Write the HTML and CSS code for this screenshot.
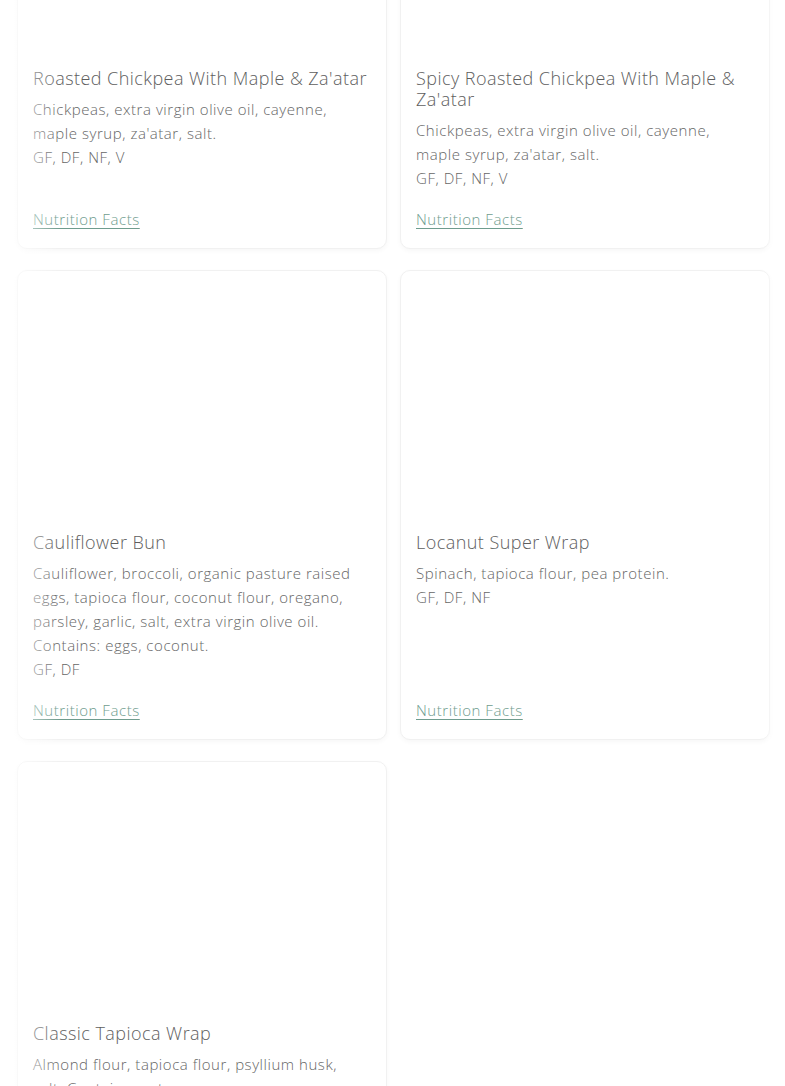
FILE: index.html
```html
<!DOCTYPE html>
<html lang="en">
<head>
<meta charset="utf-8">
<title>Wraps &amp; Buns</title>
<link rel="stylesheet" href="styles.css">
</head>
<body>
<div class="page">
  <div class="grid">
    <article class="card">
      <div class="photo"></div>
      <h3 class="title">Roasted Chickpea With Maple &amp; Za'atar</h3>
      <p class="desc">Chickpeas, extra virgin olive oil, cayenne, maple syrup, za'atar, salt.</p>
      <p class="tags">GF, DF, NF, V</p>
      <a class="facts" href="#">Nutrition Facts</a>
    </article>
    <article class="card">
      <div class="photo"></div>
      <h3 class="title">Spicy Roasted Chickpea With Maple &amp; Za'atar</h3>
      <p class="desc">Chickpeas, extra virgin olive oil, cayenne, maple syrup, za'atar, salt.</p>
      <p class="tags">GF, DF, NF, V</p>
      <a class="facts" href="#">Nutrition Facts</a>
    </article>
    <article class="card">
      <div class="photo"></div>
      <h3 class="title">Cauliflower Bun</h3>
      <p class="desc">Cauliflower, broccoli, organic pasture raised eggs, tapioca flour, coconut flour, oregano, parsley, garlic, salt, extra virgin olive oil. Contains: eggs, coconut.</p>
      <p class="tags">GF, DF</p>
      <a class="facts" href="#">Nutrition Facts</a>
    </article>
    <article class="card">
      <div class="photo"></div>
      <h3 class="title">Locanut Super Wrap</h3>
      <p class="desc">Spinach, tapioca flour, pea protein.</p>
      <p class="tags">GF, DF, NF</p>
      <a class="facts" href="#">Nutrition Facts</a>
    </article>
    <article class="card">
      <div class="photo"></div>
      <h3 class="title">Classic Tapioca Wrap</h3>
      <p class="desc">Almond flour, tapioca flour, psyllium husk, salt. Contains: nuts.</p>
      <p class="tags">GF, DF, V</p>
      <a class="facts" href="#">Nutrition Facts</a>
    </article>
  </div>
  <div class="fade fade-left"></div>
  <div class="fade fade-right"></div>
</div>
</body>
</html>
```
FILE: styles.css
```css
html, body {
  margin: 0;
  padding: 0;
  background: #ffffff;
}
body {
  font-family: "Open Sans", Lato, "Liberation Sans", sans-serif;
  font-weight: 300;
  color: #6a6a6a;
  overflow: hidden;
}
.page {
  position: relative;
  height: 1086px;
  overflow: hidden;
}
.grid {
  display: grid;
  grid-template-columns: 370px 370px;
  column-gap: 13px;
  row-gap: 21px;
  padding: 0 15px 0 17px;
  margin-top: -194px;
  align-items: stretch;
}
.card {
  display: flex;
  flex-direction: column;
  border: 1px solid #f1f1f1;
  border-radius: 10px;
  box-shadow: 0 2px 5px rgba(0, 0, 0, 0.035);
  padding: 15px 15px 17px 15px;
  background: #fff;
}
.photo {
  height: 246px;
}
.title {
  margin: 0;
  font-size: 18px;
  line-height: 21px;
  font-weight: 300;
  letter-spacing: 0.45px;
  color: #5e5e5e;
}
.desc {
  margin: 8px 0 0 0;
  font-size: 15px;
  line-height: 24px;
  letter-spacing: 0.55px;
  color: #666666;
}
.tags {
  margin: 0;
  font-size: 15px;
  line-height: 24px;
  letter-spacing: 0.55px;
  color: #666666;
}
.facts {
  margin-top: auto;
  padding-top: 17px;
  font-size: 15px;
  line-height: 24px;
  letter-spacing: 0.55px;
  color: #6f9c8e;
  text-decoration: underline;
  text-underline-offset: 3px;
  align-self: flex-start;
}
.fade {
  position: absolute;
  top: 0;
  bottom: 0;
  pointer-events: none;
}
.fade-left {
  left: 0;
  width: 60px;
  background: linear-gradient(to right, rgba(255,255,255,0.85), rgba(255,255,255,0));
}
.fade-right {
  right: 0;
  width: 24px;
  background: linear-gradient(to left, rgba(255,255,255,0.85), rgba(255,255,255,0));
}
```
